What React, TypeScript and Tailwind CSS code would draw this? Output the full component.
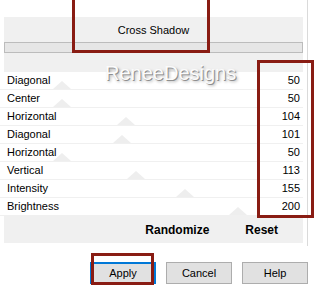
import React from "react";

const rows: { label: string; value: number }[] = [
  { label: "Diagonal", value: 50 },
  { label: "Center", value: 50 },
  { label: "Horizontal", value: 104 },
  { label: "Diagonal", value: 101 },
  { label: "Horizontal", value: 50 },
  { label: "Vertical", value: 113 },
  { label: "Intensity", value: 155 },
  { label: "Brightness", value: 200 },
];

export default function App() {
  return (
    <div className="relative w-[316px] h-[291px] bg-white overflow-hidden font-['Liberation_Sans',Arial,sans-serif] text-[11px] text-black">
      <div className="w-[308px] h-[246px] border-r border-[#dadada] flex flex-col">
        <div className="h-[17px] shrink-0" />
        <div className="ml-[4px] w-[299px] h-[55px] shrink-0 bg-[#f0f0f0] flex flex-col">
          <div className="h-[25px] flex items-center justify-center pt-[1px]">Cross Shadow</div>
          <div className="h-[11px] bg-[#e6e6e6] border border-[#bcbcbc]" />
        </div>
        <div className="w-[303px] flex flex-col">
          {rows.map((r, i) => (
            <div
              key={i}
              className="relative h-[18px] flex items-center justify-between pl-[7px] pr-[3px] bg-white border-b border-[#f0f0f0]"
            >
              <div
                className="absolute bottom-0 w-0 h-0 border-l-[9px] border-r-[9px] border-b-[8px] border-l-transparent border-r-transparent border-b-[#eeeeee]"
                style={{ left: 4 + (r.value / 255) * 298 - 9 }}
              />
              <span className="relative">{r.label}</span>
              <span className="relative">{r.value}</span>
            </div>
          ))}
        </div>
        <div className="ml-[4px] w-[299px] h-[27px] shrink-0 bg-[#f0f0f0] flex items-center justify-end pr-[25px] gap-[36px] font-bold text-[12px]">
          <span>Randomize</span>
          <span>Reset</span>
        </div>
      </div>
      <div className="flex justify-end gap-[10px] pr-[8px] mt-[16px]">
        <button className="w-[66px] h-[22px] bg-[#e1e1e1] border-2 border-[#0078d7] flex items-center justify-center text-[11px]">
          Apply
        </button>
        <button className="w-[66px] h-[22px] bg-[#e1e1e1] border border-[#adadad] flex items-center justify-center text-[11px]">
          Cancel
        </button>
        <button className="w-[66px] h-[22px] bg-[#e1e1e1] border border-[#adadad] flex items-center justify-center text-[11px]">
          Help
        </button>
      </div>

      <div className="absolute left-[105px] top-[62px] text-[20px] leading-[22px] text-[#fbfbfb] [text-shadow:1px_1px_0_#8f8f8f,2px_2px_3px_rgba(0,0,0,0.3)] pointer-events-none">
        ReneeDesigns
      </div>

      <div className="absolute left-[72px] top-[-4px] w-[138px] h-[57px] border-[3px] border-[#891c13] pointer-events-none" />
      <div className="absolute left-[257px] top-[60px] w-[57px] h-[158px] border-[3px] border-[#891c13] pointer-events-none" />
      <div className="absolute left-[91px] top-[253px] w-[63px] h-[32px] border-[3px] border-[#891c13] pointer-events-none" />
    </div>
  );
}
